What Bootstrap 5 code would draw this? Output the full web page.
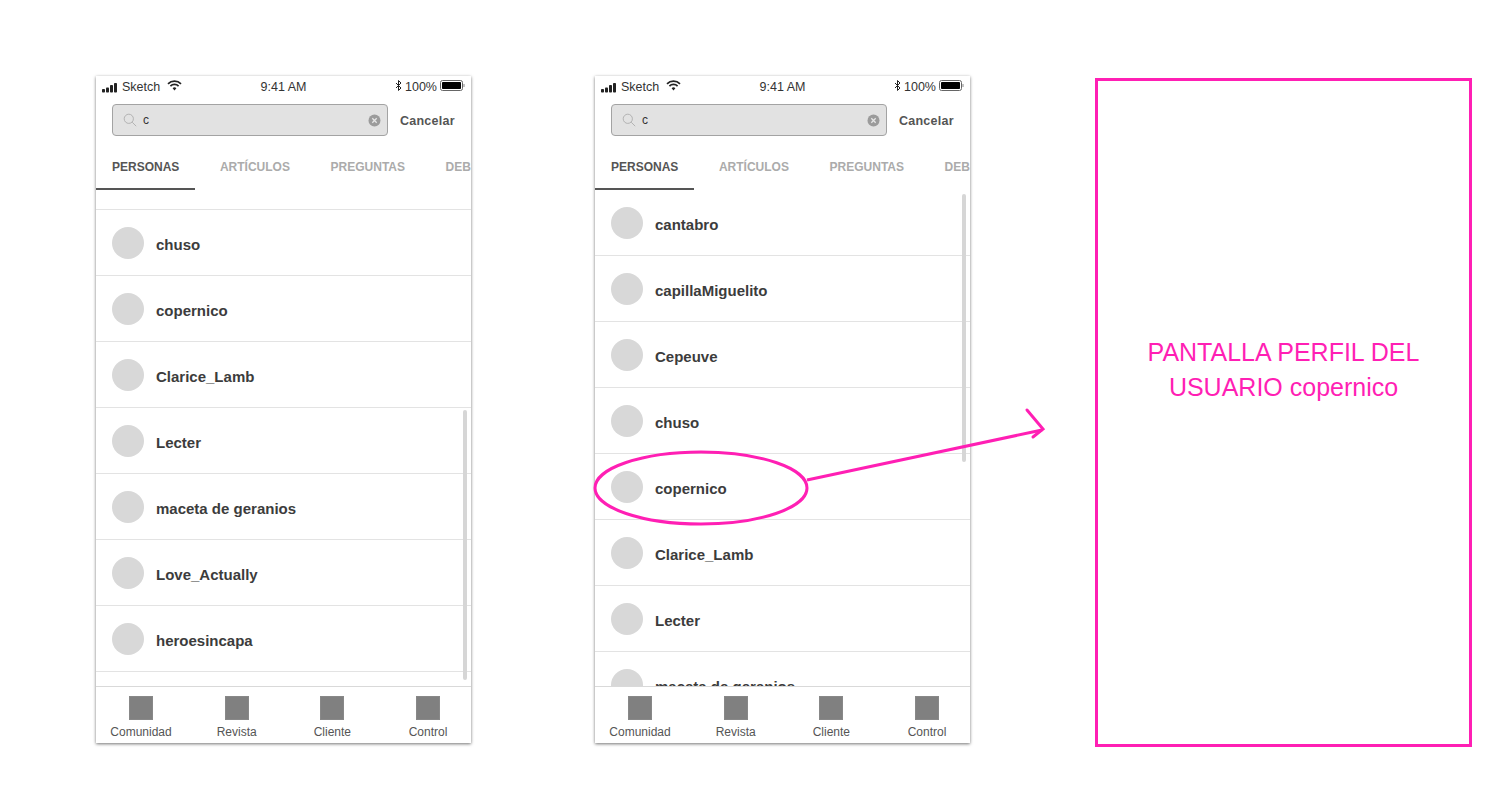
<!DOCTYPE html>
<html lang="es">
<head>
<meta charset="utf-8">
<title>Búsqueda de personas</title>
<link href="https://cdn.jsdelivr.net/npm/bootstrap@5.3.0/dist/css/bootstrap.min.css" rel="stylesheet">
<style>
html,body{height:100%;background:#fff;overflow:hidden}
body{font-family:"Liberation Sans",Arial,sans-serif;color:#3a3a3a}
.stage{position:relative;width:1511px;height:798px;padding:76px 0 0 96px;gap:124px}
.phone{position:relative;width:375px;height:667px;background:#fff;box-shadow:0 1px 3px rgba(0,0,0,.55);overflow:hidden;flex:none}
.statusbar{display:grid;grid-template-columns:1fr auto 1fr;align-items:center;height:23px;padding:0 6px 0 6px;font-size:12.5px;color:#333;flex:none}
.statusleft{gap:3px}
.statusright{gap:3px}
.searchrow{height:32px;margin:5px 0 0 16px;flex:none}
.searchbox{width:276px;height:32px;background:#e2e2e2;border:1px solid #a3a3a3;border-radius:4px;padding:0 6px 0 10px;font-size:12px}
.searchq{margin-left:6px;flex:1;color:#333}
.cancelbtn{margin-left:12px;padding-top:2px;font-size:12.5px;font-weight:700;color:#555;letter-spacing:.25px}
.tabrow{height:54px;padding-left:16px;gap:40.6px;overflow:hidden;flex:none;white-space:nowrap;font-size:12px;font-weight:700;color:#ababab;position:relative;line-height:1;padding-bottom:17px}
.tabrow .on{color:#555}
.tabline{position:absolute;left:0;bottom:0;width:99px;height:2px;background:#555}
.peoplelist{flex:1;min-height:0;overflow:hidden}
.toprow{height:20px;flex:none;border-bottom:1px solid #e3e3e3}
.person{height:66px;flex:none;border-bottom:1px solid #e3e3e3;padding-left:16px;gap:12px;font-size:15px;font-weight:700;color:#3c3c3c}
.personname{margin-top:6px}
.avatar{width:32px;height:32px;border-radius:50%;background:#d8d8d8;flex:none}
.bottombar{height:57px;flex:none;border-top:1px solid #d9d9d9;padding:9px 31px 0 33px;font-size:12px;color:#555}
.tabitem{width:24px;white-space:nowrap;line-height:14px}
.tabicon{width:24px;height:24px;background:#808080;border:1px solid #888;flex:none;margin-bottom:5px}
.scrollthumb{position:absolute;width:4px;background:#d6d6d6;border-radius:2px}
.thumbleft{left:367px;top:334px;height:270px}
.thumbright{left:367px;top:118px;height:268px}
.profilebox{width:377px;height:669px;margin:2px 0 0 1px;border:3px solid #ff1fb4;color:#ff1fb4;font-size:25px;line-height:35px;padding-bottom:85px;flex:none}
.overlay{position:absolute;left:0;top:0;pointer-events:none}
</style>
</head>
<body>
<div class="stage d-flex align-items-start">

  <section class="phone d-flex flex-column">
    <div class="statusbar">
      <div class="statusleft d-flex align-items-center">
        <svg width="17" height="10" viewBox="0 0 17 10"><rect x="0" y="6" width="3" height="3.5" rx=".8" fill="#222"/><rect x="4" y="4.5" width="3" height="5" rx=".8" fill="#222"/><rect x="8" y="2" width="3" height="7.5" rx=".8" fill="#222"/><rect x="12" y="0" width="3" height="9.5" rx=".8" fill="#222"/></svg>
        <span>Sketch</span>
        <svg class="ms-1 mb-1" width="15" height="11" viewBox="0 0 15 11" fill="none" stroke="#222" stroke-width="1.7"><path d="M1 3.8a9.2 9.2 0 0 1 13 0"/><path d="M3.4 6.1a5.8 5.8 0 0 1 8.2 0"/><path d="M7.5 10.4 5.6 8.3a2.7 2.7 0 0 1 3.8 0z" fill="#222" stroke="none"/></svg>
      </div>
      <div>9:41 AM</div>
      <div class="statusright d-flex align-items-center justify-content-end">
        <svg class="mb-1" width="7" height="11" viewBox="0 0 7 11" fill="none" stroke="#222" stroke-width="1"><path d="M1 3l5 5-2.5 2.5v-10L6 3 1 8"/></svg>
        <span>100%</span>
        <svg class="mb-1" width="25" height="11" viewBox="0 0 25 11"><rect x=".5" y=".5" width="22" height="10" rx="2" fill="#fff" stroke="#666"/><rect x="2" y="2" width="19" height="7" rx=".8" fill="#000"/><rect x="23.5" y="4" width="1" height="3" fill="#888"/></svg>
      </div>
    </div>
    <div class="searchrow d-flex align-items-center">
      <div class="searchbox d-flex align-items-center">
        <svg width="14" height="14" viewBox="0 0 14 14" fill="none" stroke="#b3b3b3" stroke-width="1"><circle cx="5.8" cy="5.8" r="4.6"/><path d="M9.2 9.2 13.2 13.2"/></svg>
        <span class="searchq">c</span>
        <svg width="13" height="13" viewBox="0 0 13 13"><circle cx="6.5" cy="6.5" r="6" fill="#9b9b9b"/><path d="M4.3 4.3l4.4 4.4M8.7 4.3 4.3 8.7" stroke="#e6e6e6" stroke-width="1.3"/></svg>
      </div>
      <span class="cancelbtn">Cancelar</span>
    </div>
    <nav class="tabrow d-flex align-items-end">
      <span class="on">PERSONAS</span><span>ARTÍCULOS</span><span>PREGUNTAS</span><span>DEBATES</span>
      <div class="tabline"></div>
    </nav>
    <div class="peoplelist d-flex flex-column">
      <div class="toprow"></div>
      <div class="person d-flex align-items-center"><div class="avatar"></div><span class="personname">chuso</span></div>
      <div class="person d-flex align-items-center"><div class="avatar"></div><span class="personname">copernico</span></div>
      <div class="person d-flex align-items-center"><div class="avatar"></div><span class="personname">Clarice_Lamb</span></div>
      <div class="person d-flex align-items-center"><div class="avatar"></div><span class="personname">Lecter</span></div>
      <div class="person d-flex align-items-center"><div class="avatar"></div><span class="personname">maceta de geranios</span></div>
      <div class="person d-flex align-items-center"><div class="avatar"></div><span class="personname">Love_Actually</span></div>
      <div class="person d-flex align-items-center"><div class="avatar"></div><span class="personname">heroesincapa</span></div>
    </div>
    <div class="bottombar d-flex justify-content-between align-items-start">
      <div class="tabitem d-flex flex-column align-items-center"><div class="tabicon"></div>Comunidad</div>
      <div class="tabitem d-flex flex-column align-items-center"><div class="tabicon"></div>Revista</div>
      <div class="tabitem d-flex flex-column align-items-center"><div class="tabicon"></div>Cliente</div>
      <div class="tabitem d-flex flex-column align-items-center"><div class="tabicon"></div>Control</div>
    </div>
    <div class="scrollthumb thumbleft"></div>
  </section>

  <section class="phone d-flex flex-column">
    <div class="statusbar">
      <div class="statusleft d-flex align-items-center">
        <svg width="17" height="10" viewBox="0 0 17 10"><rect x="0" y="6" width="3" height="3.5" rx=".8" fill="#222"/><rect x="4" y="4.5" width="3" height="5" rx=".8" fill="#222"/><rect x="8" y="2" width="3" height="7.5" rx=".8" fill="#222"/><rect x="12" y="0" width="3" height="9.5" rx=".8" fill="#222"/></svg>
        <span>Sketch</span>
        <svg class="ms-1 mb-1" width="15" height="11" viewBox="0 0 15 11" fill="none" stroke="#222" stroke-width="1.7"><path d="M1 3.8a9.2 9.2 0 0 1 13 0"/><path d="M3.4 6.1a5.8 5.8 0 0 1 8.2 0"/><path d="M7.5 10.4 5.6 8.3a2.7 2.7 0 0 1 3.8 0z" fill="#222" stroke="none"/></svg>
      </div>
      <div>9:41 AM</div>
      <div class="statusright d-flex align-items-center justify-content-end">
        <svg class="mb-1" width="7" height="11" viewBox="0 0 7 11" fill="none" stroke="#222" stroke-width="1"><path d="M1 3l5 5-2.5 2.5v-10L6 3 1 8"/></svg>
        <span>100%</span>
        <svg class="mb-1" width="25" height="11" viewBox="0 0 25 11"><rect x=".5" y=".5" width="22" height="10" rx="2" fill="#fff" stroke="#666"/><rect x="2" y="2" width="19" height="7" rx=".8" fill="#000"/><rect x="23.5" y="4" width="1" height="3" fill="#888"/></svg>
      </div>
    </div>
    <div class="searchrow d-flex align-items-center">
      <div class="searchbox d-flex align-items-center">
        <svg width="14" height="14" viewBox="0 0 14 14" fill="none" stroke="#b3b3b3" stroke-width="1"><circle cx="5.8" cy="5.8" r="4.6"/><path d="M9.2 9.2 13.2 13.2"/></svg>
        <span class="searchq">c</span>
        <svg width="13" height="13" viewBox="0 0 13 13"><circle cx="6.5" cy="6.5" r="6" fill="#9b9b9b"/><path d="M4.3 4.3l4.4 4.4M8.7 4.3 4.3 8.7" stroke="#e6e6e6" stroke-width="1.3"/></svg>
      </div>
      <span class="cancelbtn">Cancelar</span>
    </div>
    <nav class="tabrow d-flex align-items-end">
      <span class="on">PERSONAS</span><span>ARTÍCULOS</span><span>PREGUNTAS</span><span>DEBATES</span>
      <div class="tabline"></div>
    </nav>
    <div class="peoplelist d-flex flex-column">
      <div class="person d-flex align-items-center"><div class="avatar"></div><span class="personname">cantabro</span></div>
      <div class="person d-flex align-items-center"><div class="avatar"></div><span class="personname">capillaMiguelito</span></div>
      <div class="person d-flex align-items-center"><div class="avatar"></div><span class="personname">Cepeuve</span></div>
      <div class="person d-flex align-items-center"><div class="avatar"></div><span class="personname">chuso</span></div>
      <div class="person d-flex align-items-center"><div class="avatar"></div><span class="personname">copernico</span></div>
      <div class="person d-flex align-items-center"><div class="avatar"></div><span class="personname">Clarice_Lamb</span></div>
      <div class="person d-flex align-items-center"><div class="avatar"></div><span class="personname">Lecter</span></div>
      <div class="person d-flex align-items-center"><div class="avatar"></div><span class="personname">maceta de geranios</span></div>
    </div>
    <div class="bottombar d-flex justify-content-between align-items-start">
      <div class="tabitem d-flex flex-column align-items-center"><div class="tabicon"></div>Comunidad</div>
      <div class="tabitem d-flex flex-column align-items-center"><div class="tabicon"></div>Revista</div>
      <div class="tabitem d-flex flex-column align-items-center"><div class="tabicon"></div>Cliente</div>
      <div class="tabitem d-flex flex-column align-items-center"><div class="tabicon"></div>Control</div>
    </div>
    <div class="scrollthumb thumbright"></div>
  </section>

  <section class="profilebox d-flex align-items-center justify-content-center text-center">
    <div>PANTALLA PERFIL DEL<br>USUARIO copernico</div>
  </section>

  <svg class="overlay" width="1511" height="798" viewBox="0 0 1511 798" fill="none" stroke="#ff1fb4" stroke-width="3">
    <ellipse cx="701" cy="488" rx="106" ry="36"/>
    <path d="M807 480 1042 430"/>
    <path d="M1027 410 1043 429 1033 437" stroke-linecap="round"/>
  </svg>
</div>
<script src="https://cdn.jsdelivr.net/npm/bootstrap@5.3.0/dist/js/bootstrap.bundle.min.js"></script>
</body>
</html>
